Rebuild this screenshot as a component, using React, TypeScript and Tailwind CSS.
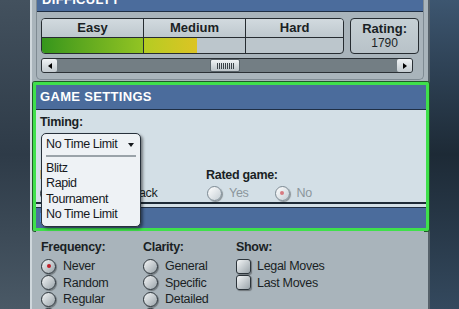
import React from "react"

const font = { fontFamily: '"Liberation Sans", Arial, sans-serif' }

function Radio({ on, faded }: { on?: boolean; faded?: boolean }) {
    return (
        <span className={`flex items-center justify-center w-[15px] h-[15px] rounded-full border shadow-[1px_1px_1px_rgba(0,0,0,0.35)] ${faded ? "border-[#7d8a93] bg-gradient-to-br from-white to-[#c5ced4]" : "border-[#2c343a] bg-gradient-to-br from-[#f4f6f7] to-[#9aa4aa]"}`}>
            {on && <span className={`w-[4px] h-[4px] rounded-full ${faded ? "bg-[#d77a80]" : "bg-[#c0202a]"}`} />}
        </span>
    )
}

function Check() {
    return <span className="w-[15px] h-[15px] rounded-[3px] border border-[#2c343a] bg-gradient-to-br from-[#f4f6f7] to-[#9aa4aa] shadow-[1px_1px_1px_rgba(0,0,0,0.35)]" />
}

function Option({ label, on, faded }: { label: string; on?: boolean; faded?: boolean }) {
    return (
        <div className="flex items-center gap-[7px] h-[16.5px]">
            <Radio on={on} faded={faded} />
            <span className={`text-[12.5px] tracking-[-0.3px] leading-none ${faded ? "text-[#8b969c]" : "text-[#1a1f24]"}`}>{label}</span>
        </div>
    )
}

function Label({ children }: { children: React.ReactNode }) {
    return <span className="block text-[12.5px] tracking-[-0.3px] font-bold text-[#1a1f24] leading-none">{children}</span>
}

export default function App() {
    return (
        <div style={font} className="relative w-[459px] h-[309px] overflow-hidden flex bg-gradient-to-b from-[#3a4856] via-[#2b3845] to-[#3c4b58]">
            <div className="w-[30px] bg-gradient-to-b from-[#43515e] via-[#2e3b48] to-[#4a5966]" />

            {/* main panel */}
            <div className="w-[400px] bg-[#a9b4bb] border-l-2 border-l-[#cfd7dc] border-r-2 border-r-[#56616a] flex flex-col">
                {/* difficulty */}
                <div className="mx-[4px] w-[388px] flex flex-col rounded-b-[5px] border-x border-b border-[#7f8b93] bg-[#a9b4bb]">
                    <div className="mt-[-12px] h-[24px] bg-[#4b6c9c] border-b border-[#1f2f45] flex items-center pl-[5px]">
                        <span className="text-white font-bold text-[13px] tracking-wide">DIFFICULTY</span>
                    </div>
                    <div className="px-[4px] pt-[6px] pb-[6px] flex flex-col gap-[4px]">
                        <div className="flex gap-[6px]">
                            <div className="w-[304px] h-[36px] rounded-[4px] border border-[#262c31] overflow-hidden flex flex-col bg-[#bcc6cc]">
                                <div className="h-[19px] flex border-b border-[#262c31] bg-gradient-to-b from-[#d2dadf] to-[#bec8ce]">
                                    <div className="w-[102px] border-r border-[#262c31] flex items-center justify-center text-[13px] font-bold text-[#1a1f24]">Easy</div>
                                    <div className="w-[102px] border-r border-[#262c31] flex items-center justify-center text-[13px] font-bold text-[#1a1f24]">Medium</div>
                                    <div className="flex-1 flex items-center justify-center text-[13px] font-bold text-[#1a1f24]">Hard</div>
                                </div>
                                <div className="flex-1 flex">
                                    <div className="w-[102px] border-r border-[#262c31] bg-gradient-to-r from-[#34961c] to-[#92c423]" />
                                    <div className="w-[102px] border-r border-[#262c31] flex">
                                        <div className="w-[53px] bg-gradient-to-r from-[#b4cc22] to-[#dcc424]" />
                                    </div>
                                </div>
                            </div>
                            <div className="w-[69px] h-[36px] rounded-[4px] border border-[#262c31] bg-gradient-to-b from-[#c6d0d5] to-[#b8c2c8] flex flex-col items-center justify-center leading-[15px] text-[#1a1f24]">
                                <span className="text-[13px] font-bold">Rating:</span>
                                <span className="text-[12px]">1790</span>
                            </div>
                        </div>
                        <div className="w-[372px] h-[15px] rounded-[3px] border border-[#2a3035] bg-[#737e84] flex items-center justify-between">
                            <div className="w-[15px] h-[13px] rounded-[2px] bg-gradient-to-b from-[#f0f3f5] to-[#c3cbd0] flex items-center justify-center">
                                <span className="w-0 h-0 border-y-[3px] border-y-transparent border-r-[4px] border-r-black" />
                            </div>
                            <div className="w-[30px] h-[13px] rounded-[2px] bg-gradient-to-b from-[#f0f3f5] to-[#bcc4c9] border border-[#5a646a] flex items-center justify-center gap-[1px] ml-[153px] mr-auto">
                                {Array.from({ length: 9 }).map((_, i) => (
                                    <span key={i} className="w-[1px] h-[6px] bg-[#3a4248]" />
                                ))}
                            </div>
                            <div className="w-[15px] h-[13px] rounded-[2px] bg-gradient-to-b from-[#f0f3f5] to-[#c3cbd0] flex items-center justify-center">
                                <span className="w-0 h-0 border-y-[3px] border-y-transparent border-l-[4px] border-l-black" />
                            </div>
                        </div>
                    </div>
                </div>

                {/* game settings, highlighted */}
                <div className="mt-[2px] ml-[1px] w-[396px] h-[153px] border-[3px] border-[#3fe04b] rounded-[2px] shadow-[0_0_0_1px_#1f5a26] flex flex-col">
                    <div className="h-[25px] bg-[#4b6c9c] border-b border-[#1f2f45] flex items-center pl-[4px]">
                        <span className="text-white font-bold text-[13px] tracking-wide">GAME SETTINGS</span>
                    </div>
                    <div className="h-[94px] bg-[#d3dfe6] border-b-2 border-[#1d2a36] pl-[4px] pt-[6px] flex flex-col">
                        <Label>Timing:</Label>
                        <div className="flex mt-[40px] gap-[62px]">
                            <div className="flex flex-col w-[104px]">
                                <Label>Play as:</Label>
                                <div className="flex mt-[4px] gap-[14px]">
                                    <Option label="White" />
                                    <Option label="Black" />
                                </div>
                            </div>
                            <div className="flex flex-col">
                                <Label>Rated game:</Label>
                                <div className="flex mt-[4px] gap-[26px] pl-[1px]">
                                    <Option label="Yes" faded />
                                    <Option label="No" on faded />
                                </div>
                            </div>
                        </div>
                    </div>
                    <div className="h-[3px] bg-[#d3dfe6]" />
                    <div className="flex-1 bg-[#4b6c9c] border-t border-[#1f2f45] flex items-center pl-[4px]">
                        <span className="text-white font-bold text-[13px] tracking-wide">HINTS</span>
                    </div>
                </div>

                {/* hints */}
                <div className="mx-[4px] flex-1 bg-[#a9b4bb] pl-[5px] pt-[10px] flex">
                    <div className="w-[102px] flex flex-col">
                        <div className="mb-[5px]"><Label>Frequency:</Label></div>
                        <Option label="Never" on />
                        <Option label="Random" />
                        <Option label="Regular" />
                        <Option label="Always" />
                    </div>
                    <div className="w-[93px] flex flex-col">
                        <div className="mb-[5px]"><Label>Clarity:</Label></div>
                        <Option label="General" />
                        <Option label="Specific" />
                        <Option label="Detailed" />
                        <Option label="Full" />
                    </div>
                    <div className="flex flex-col">
                        <div className="mb-[5px]"><Label>Show:</Label></div>
                        <div className="flex items-center gap-[6px] h-[16.5px]"><Check /><span className="text-[12.5px] tracking-[-0.3px] leading-none text-[#1a1f24]">Legal Moves</span></div>
                        <div className="flex items-center gap-[6px] h-[16.5px]"><Check /><span className="text-[12.5px] tracking-[-0.3px] leading-none text-[#1a1f24]">Last Moves</span></div>
                    </div>
                </div>
            </div>

            <div className="flex-1 bg-gradient-to-b from-[#3d5670] via-[#1d2a36] to-[#34495e]" />

            {/* open timing dropdown */}
            <div className="absolute left-[41px] top-[133px] w-[100px] h-[94px] rounded-[5px] border border-[#27313b] bg-[#eef2f5] shadow-[2px_2px_3px_rgba(0,0,0,0.45)] px-[4px] pt-[3px] flex flex-col text-[12.5px] tracking-[-0.4px] text-[#15191d] leading-[15.5px]">
                <div className="flex items-center justify-between pr-[2px]">
                    <span>No Time Limit</span>
                    <span className="w-0 h-0 border-x-[3px] border-x-transparent border-t-[4px] border-t-[#15191d]" />
                </div>
                <div className="h-[2px] bg-[#9aa3a9] mt-[2px] mb-[4px]" />
                <span>Blitz</span>
                <span>Rapid</span>
                <span>Tournament</span>
                <span>No Time Limit</span>
            </div>
        </div>
    )
}
